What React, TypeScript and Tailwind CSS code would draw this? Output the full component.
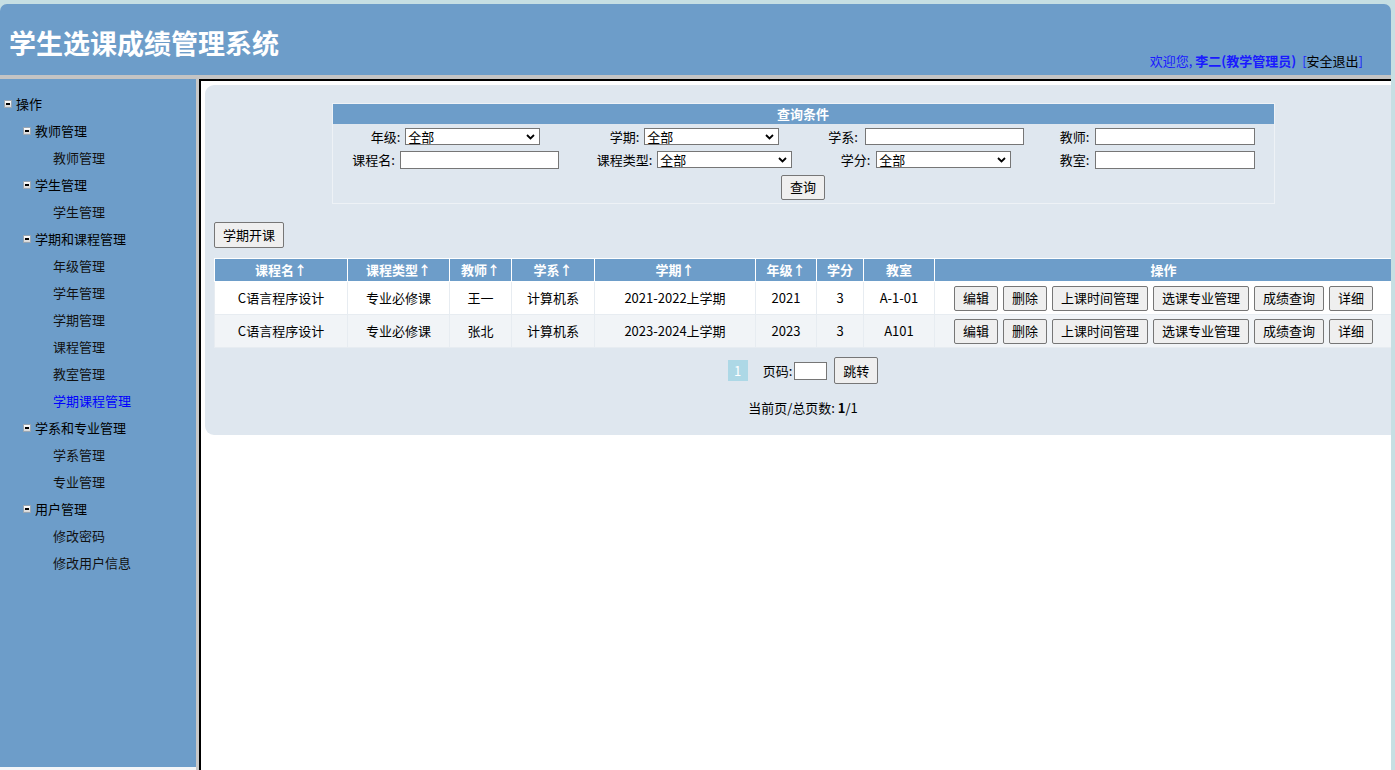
export default function App() {
  return (
    <div className="w-[1395px] h-[770px] overflow-hidden bg-[#c6dfe3] pt-[4px] pr-[4px] flex flex-col font-['Microsoft_YaHei','Noto_Sans_CJK_SC',sans-serif] text-[13px] text-black">
      {/* Top frame */}
      <div className="h-[71px] shrink-0 bg-[#6d9dc9] rounded-t-[7px] flex items-end justify-end pr-[28px] relative">
        <div className="absolute left-[9px] top-[21px] text-white font-bold text-[27px] leading-[36px]">
          学生选课成绩管理系统
        </div>
        <div className="mb-[5px] leading-[18px] text-[#1a1aff]">
          欢迎您, <span className="font-bold">李二(教学管理员)</span>
          <span className="ml-[6px]">[</span>
          <span className="text-black">安全退出</span>
          <span>]</span>
        </div>
      </div>
      <div className="h-[4px] shrink-0 bg-[#c4c4c4]" />

      <div className="flex flex-1 min-h-0">
        {/* Left frame */}
        <Sidebar />
        <div className="w-[3px] shrink-0 bg-[#c8c8c8]" />
        {/* Main frame */}
        <div className="flex-1 min-w-0 bg-white border-l-2 border-t-2 border-black overflow-hidden pt-[4px] pl-[4px]">
          <MainPanel />
        </div>
      </div>
    </div>
  )
}

function Minus() {
  return (
    <span className="inline-flex w-[8px] h-[8px] items-center justify-center bg-gradient-to-b from-white to-[#d8d8d8] border border-[#9aa6b2] shrink-0">
      <span className="w-[4px] h-[2px] bg-black" />
    </span>
  )
}

function Sidebar() {
  const items: { text: string; level: number; active?: boolean }[] = [
    { text: '操作', level: 0 },
    { text: '教师管理', level: 1 },
    { text: '教师管理', level: 2 },
    { text: '学生管理', level: 1 },
    { text: '学生管理', level: 2 },
    { text: '学期和课程管理', level: 1 },
    { text: '年级管理', level: 2 },
    { text: '学年管理', level: 2 },
    { text: '学期管理', level: 2 },
    { text: '课程管理', level: 2 },
    { text: '教室管理', level: 2 },
    { text: '学期课程管理', level: 2, active: true },
    { text: '学系和专业管理', level: 1 },
    { text: '学系管理', level: 2 },
    { text: '专业管理', level: 2 },
    { text: '用户管理', level: 1 },
    { text: '修改密码', level: 2 },
    { text: '修改用户信息', level: 2 },
  ]
  return (
    <div className="w-[196px] shrink-0 bg-[#6d9dc9] pt-[11px] border-b-[3px] border-[#f4f6f8]">
      {items.map((it, i) => (
        <div key={i} className="h-[27px] flex items-center">
          {it.level === 0 && (
            <div className="flex items-center pl-[4px] gap-[4px]">
              <Minus />
              <span>{it.text}</span>
            </div>
          )}
          {it.level === 1 && (
            <div className="flex items-center pl-[23px] gap-[4px]">
              <Minus />
              <span>{it.text}</span>
            </div>
          )}
          {it.level === 2 && (
            <span className={'pl-[53px] ' + (it.active ? 'text-[#0000ff]' : 'text-[#111]')}>{it.text}</span>
          )}
        </div>
      ))}
    </div>
  )
}

// drawn like a native select so the text is not clipped
function Select({ w }: { w: string }) {
  return (
    <div className={`${w} h-[17px] border border-[#767676] bg-white flex items-center justify-between pl-[2px] pr-[4px]`}>
      <span className="leading-[14px]">全部</span>
      <svg width="9" height="6" viewBox="0 0 9 6">
        <path d="M1 1l3.5 3.5L8 1" fill="none" stroke="#000" strokeWidth="1.8" />
      </svg>
    </div>
  )
}

function Btn({ children, h, className = '' }: { children: React.ReactNode; h: string; className?: string }) {
  return (
    <button className={`${h} px-[8px] bg-[#efefef] border border-[#767676] rounded-[2px] text-[13px] leading-[18px] text-black ${className}`}>
      {children}
    </button>
  )
}

function MainPanel() {
  const headers = ['课程名↑', '课程类型↑', '教师↑', '学系↑', '学期↑', '年级↑', '学分', '教室', '操作']
  const rows = [
    ['C语言程序设计', '专业必修课', '王一', '计算机系', '2021-2022上学期', '2021', '3', 'A-1-01'],
    ['C语言程序设计', '专业必修课', '张北', '计算机系', '2023-2024上学期', '2023', '3', 'A101'],
  ]
  const ops = ['编辑', '删除', '上课时间管理', '选课专业管理', '成绩查询', '详细']
  return (
    <div className="w-[1196px] bg-[#dfe7ef] rounded-[9px] pt-[18px] pb-[17px] px-[9px]">
      {/* Query box */}
      <div className="w-[943px] mx-auto border border-[#eef2f6]">
        <div className="h-[20px] bg-[#6d9dc9] text-white font-bold text-center leading-[20px]">查询条件</div>
        <div className="grid grid-cols-[246px_232px_231px_232px] pt-[1px]">
          <div className="h-[23px] flex items-center justify-center gap-[5px]">
            <span>年级:</span>
            <Select w="w-[135px]" />
          </div>
          <div className="h-[23px] flex items-center justify-center gap-[5px]">
            <span>学期:</span>
            <Select w="w-[135px]" />
          </div>
          <div className="h-[23px] flex items-center justify-center gap-[7px]">
            <span>学系:</span>
            <input className="w-[159px] h-[17px] border border-[#767676] bg-white" />
          </div>
          <div className="h-[23px] flex items-center justify-center gap-[6px]">
            <span>教师:</span>
            <input className="w-[160px] h-[17px] border border-[#767676] bg-white" />
          </div>
          <div className="h-[23px] flex items-center justify-center gap-[5px]">
            <span>课程名:</span>
            <input className="w-[159px] h-[18px] border border-[#767676] bg-white" />
          </div>
          <div className="h-[23px] flex items-center justify-center gap-[5px]">
            <span>课程类型:</span>
            <Select w="w-[135px]" />
          </div>
          <div className="h-[23px] flex items-center justify-center gap-[6px]">
            <span>学分:</span>
            <Select w="w-[135px]" />
          </div>
          <div className="h-[23px] flex items-center justify-center gap-[6px]">
            <span>教室:</span>
            <input className="w-[160px] h-[18px] border border-[#767676] bg-white" />
          </div>
        </div>
        <div className="h-[32px] flex items-center justify-center">
          <Btn h="h-[25px]">查询</Btn>
        </div>
      </div>

      <div className="mt-[18px]">
        <Btn h="h-[26px]">学期开课</Btn>
      </div>

      {/* Data table */}
      <table className="mt-[10px] w-[1178px] table-fixed border-collapse">
        <colgroup>
          <col className="w-[133px]" />
          <col className="w-[102px]" />
          <col className="w-[62px]" />
          <col className="w-[83px]" />
          <col className="w-[161px]" />
          <col className="w-[61px]" />
          <col className="w-[47px]" />
          <col className="w-[71px]" />
          <col className="w-[458px]" />
        </colgroup>
        <thead>
          <tr className="h-[23px] bg-[#6d9dc9]">
            {headers.map((h, i) => (
              <th key={i} className="border border-white text-white font-bold text-center leading-[20px] p-0">
                {h}
              </th>
            ))}
          </tr>
        </thead>
        <tbody>
          {rows.map((r, ri) => (
            <tr key={ri} className={'h-[33px] ' + (ri === 0 ? 'bg-white' : 'bg-[#f1f4f7]')}>
              {r.map((c, ci) => (
                <td key={ci} className="border border-[#e7ecf1] text-center p-0">
                  {c}
                </td>
              ))}
              <td className="border border-[#e7ecf1] p-0">
                <div className="flex justify-center gap-[5px]">
                  {ops.map((o) => (
                    <Btn key={o} h="h-[25px]">{o}</Btn>
                  ))}
                </div>
              </td>
            </tr>
          ))}
        </tbody>
      </table>

      {/* Pagination */}
      <div className="mt-[9px] flex items-center justify-center">
        <span className="w-[20px] h-[21px] bg-[#add8e6] text-white flex items-center justify-center">1</span>
        <span className="ml-[15px]">页码:</span>
        <input className="ml-[2px] w-[33px] h-[18px] border border-[#767676] bg-white" />
        <Btn h="h-[27px]" className="ml-[7px]">跳转</Btn>
      </div>
      <div className="mt-[14px] text-center leading-[20px]">
        当前页/总页数: <span className="font-bold">1</span>/1
      </div>
    </div>
  )
}
